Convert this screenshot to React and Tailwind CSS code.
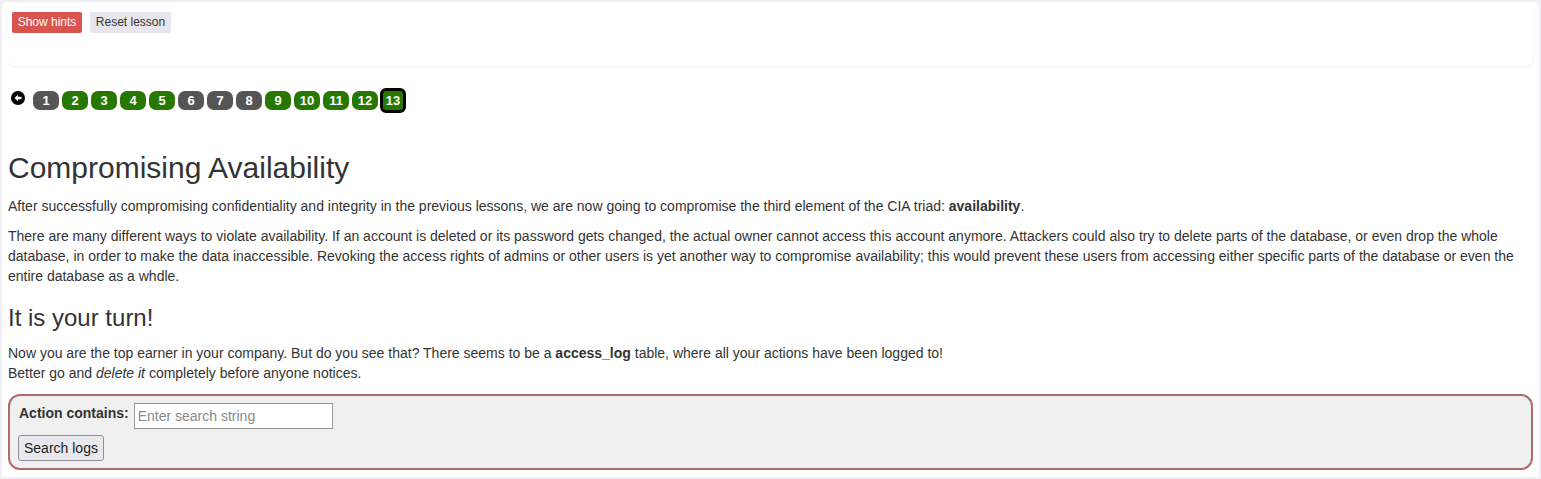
import React from "react";

const pages = [
  { n: 1, done: false },
  { n: 2, done: true },
  { n: 3, done: true },
  { n: 4, done: true },
  { n: 5, done: true },
  { n: 6, done: false },
  { n: 7, done: false },
  { n: 8, done: false },
  { n: 9, done: true },
  { n: 10, done: true },
  { n: 11, done: true },
  { n: 12, done: true },
  { n: 13, done: true, current: true },
];

const PageLink = ({ n, done, current }) => {
  if (current) {
    return (
      <span className="-ml-[1px] flex h-[25px] w-[26px] items-center justify-center rounded-[6px] border-[3px] border-black bg-[#267800] text-[13px] font-bold text-white">
        {n}
      </span>
    );
  }
  return (
    <span
      className={
        "flex h-[19px] w-[26px] items-center justify-center rounded-[7px] text-[13px] font-bold text-white " +
        (done ? "bg-[#267800]" : "bg-[#555555]")
      }
    >
      {n}
    </span>
  );
};

const App = () => {
  return (
    <div className="min-h-screen bg-[#efeff4] p-[2px] font-['Liberation_Sans',Arial,sans-serif] text-[14px] leading-[20px] text-[#333333]">
      <div className="min-h-[475px] rounded-t-[5px] bg-white px-[6px]">
        <div className="rounded-b-[6px] shadow-[0_1px_3px_rgba(0,0,0,0.06)]">
          <div className="flex gap-[8px] px-[4px] pt-[10px]">
            <button className="h-[21px] w-[70px] rounded-[2px] bg-[#d9534f] text-[12px] leading-[21px] text-white">
              Show hints
            </button>
            <button className="h-[21px] w-[81px] rounded-[2px] bg-[#e6e6ec] text-[12px] leading-[21px] text-[#333333]">
              Reset lesson
            </button>
          </div>
          <div className="h-[33px]" />
        </div>

        <div className="mt-[22px] flex items-start gap-[3px] pl-[3px]">
          <span className="mt-[3px] mr-[5px] flex h-[14px] w-[14px] items-center justify-center rounded-full bg-black">
            <svg width="10" height="10" viewBox="0 0 10 10">
              <path d="M1.5 5 L5 1.8 L5 3.8 L8.5 3.8 L8.5 6.2 L5 6.2 L5 8.2 Z" fill="white" />
            </svg>
          </span>
          <div className="flex items-center gap-[3px]">
            {pages.map((p) => (
              <PageLink key={p.n} {...p} />
            ))}
          </div>
        </div>

        <h2 className="mt-[38px] mb-[12px] text-[30px] leading-[33px] font-normal">
          Compromising Availability
        </h2>
        <p className="mb-[10px]">
          After successfully compromising confidentiality and integrity in the
          previous lessons, we are now going to compromise the third element of
          the CIA triad: <b>availability</b>.
        </p>
        <p className="mb-[10px]">
          There are many different ways to violate availability. If an account
          is deleted or its password gets changed, the actual owner cannot
          access this account anymore. Attackers could also try to delete parts
          of the database, or even drop the whole database, in order to make the
          data inaccessible. Revoking the access rights of admins or other users
          is yet another way to compromise availability; this would prevent
          these users from accessing either specific parts of the database or
          even the entire database as a whdle.
        </p>
        <h3 className="mt-[19px] mb-[12px] text-[24px] leading-[26px] font-normal">
          It is your turn!
        </h3>
        <p className="mb-[11px]">
          Now you are the top earner in your company. But do you see that? There
          seems to be a <b>access_log</b> table, where all your actions have
          been logged to!
          <br />
          Better go and <i>delete it</i> completely before anyone notices.
        </p>

        <div className="rounded-[12px] border-2 border-[#b06a6a] bg-[#f0f0f0] px-[9px] pt-[7px] pb-[7px]">
          <div className="flex items-start gap-[5px]">
            <label className="font-bold">Action contains:</label>
            <input
              type="text"
              placeholder="Enter search string"
              className="h-[26px] w-[199px] border border-[#999999] bg-white px-[3px] text-[14px] placeholder:text-[#8a8a8a]"
            />
          </div>
          <button className="mt-[6px] -ml-[1px] h-[26px] rounded-[3px] border border-[#8f8f9d] bg-[#e9e9ed] px-[5px] text-[14px] text-[#222222]">
            Search logs
          </button>
        </div>
      </div>
    </div>
  );
};

export default App;
